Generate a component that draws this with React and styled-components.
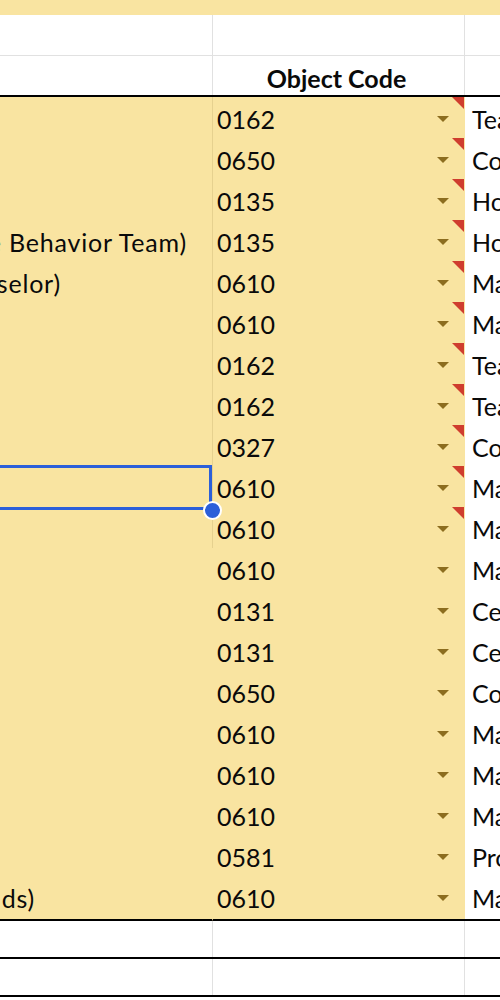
import React from "react";
import styled, { createGlobalStyle } from "styled-components";

const Global = createGlobalStyle`
  html, body { margin: 0; padding: 0; background: #ffffff; }
  body { font-family: Lato, "Open Sans", sans-serif; }
`;

const YELLOW = "#f9e4a1";
const TAN = "#e6d18f";
const GRAY = "#e1e1e1";

const Sheet = styled.div`
  width: 500px;
  overflow: hidden;
  display: flex;
  flex-direction: column;
  font-family: Lato, "Open Sans", sans-serif;
  font-size: 25px;
  color: #0a0a0a;
`;

const TopBand = styled.div`
  height: 15px;
  background: ${YELLOW};
`;

const Row = styled.div`
  display: grid;
  grid-template-columns: 213px 252px 1fr;
  height: ${(p) => p.$h}px;
  box-sizing: border-box;
  border-bottom: ${(p) => p.$line};
`;

const PlainCell = styled.div`
  box-sizing: border-box;
  border-right: ${(p) => (p.$last ? "none" : `1px solid ${GRAY}`)};
  display: flex;
  align-items: center;
  justify-content: ${(p) => (p.$center ? "center" : "flex-start")};
  line-height: 40px;
  padding-top: 4px;
  padding-right: ${(p) => (p.$center ? 4 : 0)}px;
  font-weight: ${(p) => (p.$bold ? 700 : 400)};
  white-space: nowrap;
  overflow: hidden;
`;

const DataRowBox = styled.div`
  display: grid;
  grid-template-columns: 213px 252px 1fr;
  height: ${(p) => (p.$final ? 42 : 41)}px;
`;

const ACell = styled.div`
  position: relative;
  box-sizing: border-box;
  background: ${YELLOW};
  border-right: 1px solid ${(p) => (p.$lined ? TAN : YELLOW)};
  border-bottom: ${(p) =>
    p.$final ? "2px solid #000" : `1px solid ${p.$ruled ? TAN : YELLOW}`};
  display: flex;
`;

const Clip = styled.div`
  flex: 1;
  overflow: hidden;
  display: flex;
  justify-content: flex-end;
  white-space: nowrap;
  line-height: 41px;
  padding-top: 2px;
  letter-spacing: 0.8px;
  padding-right: ${(p) => p.$end}px;
`;

const BCell = styled.div`
  position: relative;
  box-sizing: border-box;
  background: ${YELLOW};
  border-bottom: ${(p) =>
    p.$final ? "2px solid #000" : `1px solid ${p.$ruled ? TAN : YELLOW}`};
  display: flex;
  align-items: center;
  justify-content: space-between;
  padding: 0 16px 0 4px;
`;

const Code = styled.span`
  line-height: 41px;
  padding-top: 2px;
  align-self: flex-start;
`;

const Arrow = styled.span`
  width: 0;
  height: 0;
  border-left: 6.5px solid transparent;
  border-right: 6.5px solid transparent;
  border-top: 6.5px solid #8c6d1f;
`;

const Note = styled.span`
  position: absolute;
  top: 0;
  right: 1px;
  width: 0;
  height: 0;
  border-top: 12px solid #cf3d2e;
  border-left: 12px solid transparent;
`;

const CCell = styled.div`
  box-sizing: border-box;
  background: #ffffff;
  border-bottom: ${(p) => (p.$final ? "2px solid #000" : `1px solid ${GRAY}`)};
  padding: 2px 0 0 7px;
  line-height: 41px;
  white-space: nowrap;
  overflow: hidden;
`;

const Selection = styled.div`
  position: absolute;
  top: -1px;
  left: -10px;
  right: 0;
  bottom: -1px;
  border: 3px solid #2c5fd9;
  pointer-events: none;
  z-index: 2;
`;

const Handle = styled.span`
  position: absolute;
  right: -13px;
  bottom: -13px;
  width: 15px;
  height: 15px;
  border-radius: 50%;
  background: #2c5fd9;
  border: 2px solid #ffffff;
  z-index: 3;
`;

const rows = [
  { code: "0162", c: "Teacher", note: true },
  { code: "0650", c: "Counselor", note: true },
  { code: "0135", c: "Homebound", note: true },
  { code: "0135", c: "Homebound", note: true, a: "Program Specialist (Positive Behavior Team)", end: 25 },
  { code: "0610", c: "Materials", note: true, a: "Guidance Counselor (School Counselor)", end: 151 },
  { code: "0610", c: "Materials", note: true },
  { code: "0162", c: "Teacher", note: true },
  { code: "0162", c: "Teacher", note: true },
  { code: "0327", c: "Contracted", note: true },
  { code: "0610", c: "Materials", note: true, selected: true },
  { code: "0610", c: "Materials", note: true },
  { code: "0610", c: "Materials" },
  { code: "0131", c: "Certified" },
  { code: "0131", c: "Certified" },
  { code: "0650", c: "Counselor" },
  { code: "0610", c: "Materials" },
  { code: "0610", c: "Materials" },
  { code: "0610", c: "Materials" },
  { code: "0581", c: "Professional" },
  { code: "0610", c: "Materials", a: "Supplies (Federal Funds)", end: 177 },
];

function DataRow({ row, index }) {
  const lined = index < 11;
  const ruled = index < 10;
  const final = index === rows.length - 1;
  return (
    <DataRowBox $final={final}>
      <ACell $lined={lined} $ruled={ruled} $final={final}>
        <Clip $end={row.end || 0}>{row.a || ""}</Clip>
        {row.selected && (
          <Selection>
            <Handle />
          </Selection>
        )}
      </ACell>
      <BCell $ruled={ruled} $final={final}>
        <Code>{row.code}</Code>
        <Arrow />
        {row.note && <Note />}
      </BCell>
      <CCell $final={final}>{row.c}</CCell>
    </DataRowBox>
  );
}

export default function App() {
  return (
    <>
      <Global />
      <Sheet>
        <TopBand />
        <Row $h={41} $line={`1px solid ${GRAY}`}>
          <PlainCell />
          <PlainCell />
          <PlainCell $last />
        </Row>
        <Row $h={41} $line="2px solid #000">
          <PlainCell />
          <PlainCell $center $bold>
            Object Code
          </PlainCell>
          <PlainCell $last />
        </Row>
        {rows.map((row, i) => (
          <DataRow key={i} row={row} index={i} />
        ))}
        <Row $h={41} $line="2px solid #000">
          <PlainCell />
          <PlainCell />
          <PlainCell $last />
        </Row>
        <Row $h={38} $line="2px solid #000">
          <PlainCell />
          <PlainCell />
          <PlainCell $last />
        </Row>
      </Sheet>
    </>
  );
}
